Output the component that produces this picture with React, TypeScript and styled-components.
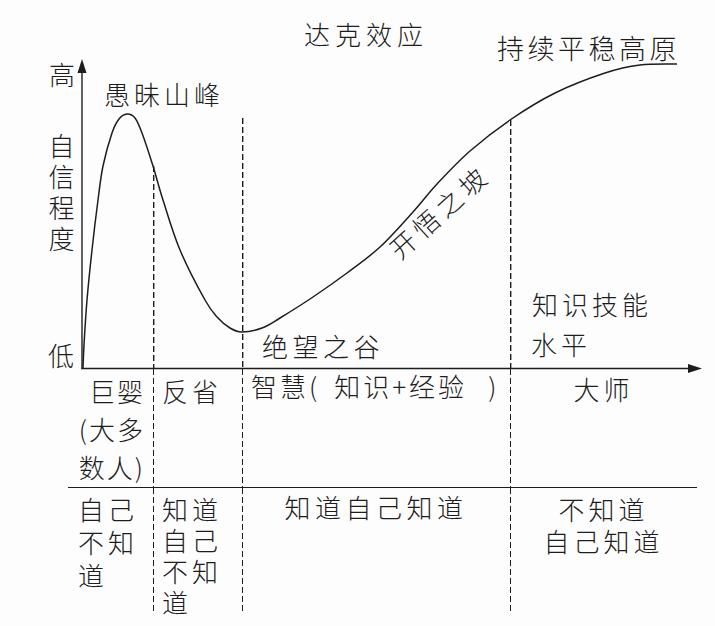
import React from "react";
import styled, { createGlobalStyle } from "styled-components";

const GlobalStyle = createGlobalStyle`
  html, body { margin: 0; padding: 0; background: #fdfdfd; }
  * { box-sizing: border-box; }
`;

const INK = "#1d1d1d";
const FONT = `"Noto Sans CJK SC", "Noto Sans", sans-serif`;

const Page = styled.div`
  width: 715px;
  height: 626px;
  background: #fdfdfd;
  color: ${INK};
  font-family: ${FONT};
  font-weight: 300;
  display: flex;
  flex-direction: column;
  overflow: hidden;
`;

const Chart = styled.div`
  position: relative;
  height: 369px;
  flex: none;
`;

const Drawing = styled.svg`
  position: absolute;
  inset: 0;
  overflow: visible;
`;

const Label = styled.div<{
  $left: number;
  $top: number;
  $size?: number;
  $ls?: number;
  $lh?: number;
  $rotate?: number;
}>`
  position: absolute;
  left: ${(p) => p.$left}px;
  top: ${(p) => p.$top}px;
  font-size: ${(p) => p.$size ?? 26}px;
  line-height: ${(p) => p.$lh ?? p.$size ?? 26}px;
  letter-spacing: ${(p) => p.$ls ?? 4}px;
  white-space: nowrap;
  transform: ${(p) => (p.$rotate ? `rotate(${p.$rotate}deg)` : "none")};
  transform-origin: center center;
`;

const VerticalLabel = styled.div<{ $left: number; $top: number }>`
  position: absolute;
  left: ${(p) => p.$left}px;
  top: ${(p) => p.$top}px;
  writing-mode: vertical-rl;
  text-orientation: upright;
  font-size: 26px;
  line-height: 28px;
  letter-spacing: 5px;
`;

const Table = styled.div`
  margin-left: 68px;
  width: 629px;
  display: grid;
  grid-template-columns: 85px 89px 268px 187px;
  grid-template-rows: 118px 126px;
  flex: none;
`;

const Cell = styled.div<{
  $dashed?: boolean;
  $rule?: boolean;
  $align?: "left" | "right" | "center";
  $pt: number;
  $pl?: number;
  $pr?: number;
  $lh?: number;
  $ls?: number;
}>`
  padding: ${(p) => p.$pt}px ${(p) => p.$pr ?? 0}px 0 ${(p) => p.$pl ?? 0}px;
  text-align: ${(p) => p.$align ?? "left"};
  font-size: 26px;
  line-height: ${(p) => p.$lh ?? 26}px;
  letter-spacing: ${(p) => p.$ls ?? 4}px;
  white-space: nowrap;
  border-top: ${(p) => (p.$rule ? `1.4px solid ${INK}` : "none")};
  background-image: ${(p) =>
    p.$dashed ? `linear-gradient(to bottom, ${INK} 0 6px, transparent 6px 9px)` : "none"};
  background-size: 1.4px 9px;
  background-repeat: repeat-y;
  background-position: 0 0;
`;

const Gap = styled.span<{ $w: number }>`
  display: inline-block;
  width: ${(p) => p.$w}px;
`;

const curvePoints: [number, number][] = [
  [83, 368], [84, 345], [87, 300], [92, 250], [98, 200], [103, 166], [112, 133],
  [119, 119], [127, 114], [135, 118], [142, 133], [153, 166], [163, 200], [180, 250],
  [205, 300], [218, 318], [230, 328], [242, 332], [262, 328], [280, 318], [313, 297],
  [347, 273], [380, 247], [413, 212], [437, 184], [470, 151], [510, 120], [555, 93],
  [605, 73], [640, 65], [677, 64],
];

function smoothPath(pts: [number, number][]): string {
  let d = `M${pts[0][0]},${pts[0][1]}`;
  for (let i = 0; i < pts.length - 1; i++) {
    const p0 = pts[i - 1] || pts[i];
    const p1 = pts[i];
    const p2 = pts[i + 1];
    const p3 = pts[i + 2] || p2;
    const c1x = p1[0] + (p2[0] - p0[0]) / 6;
    const c1y = p1[1] + (p2[1] - p0[1]) / 6;
    const c2x = p2[0] - (p3[0] - p1[0]) / 6;
    const c2y = p2[1] - (p3[1] - p1[1]) / 6;
    d += ` C${c1x.toFixed(2)},${c1y.toFixed(2)} ${c2x.toFixed(2)},${c2y.toFixed(2)} ${p2[0]},${p2[1]}`;
  }
  return d;
}

const CurveDrawing: React.FC = () => (
  <Drawing width={715} height={369} viewBox="0 0 715 369">
    {/* axes */}
    <line x1={82} y1={70} x2={82} y2={369} stroke={INK} strokeWidth={1.4} />
    <polygon points="82,59 77.5,73 86.5,73" fill={INK} />
    <line x1={81.3} y1={368.5} x2={690} y2={368.5} stroke={INK} strokeWidth={1.4} />
    <polygon points="702,368.5 688,364 688,373" fill={INK} />
    {/* dashed dividers */}
    <line x1={153.7} y1={166} x2={153.7} y2={369} stroke={INK} strokeWidth={1.4} strokeDasharray="6 3" />
    <line x1={242.7} y1={118} x2={242.7} y2={369} stroke={INK} strokeWidth={1.4} strokeDasharray="6 3" />
    <line x1={510.7} y1={120} x2={510.7} y2={369} stroke={INK} strokeWidth={1.4} strokeDasharray="6 3" />
    {/* Dunning–Kruger curve */}
    <path d={smoothPath(curvePoints)} fill="none" stroke={INK} strokeWidth={1.5} />
  </Drawing>
);

export default function App() {
  return (
    <>
      <GlobalStyle />
      <Page>
        <Chart>
          <CurveDrawing />
          <Label $left={304} $top={21} $ls={5}>达克效应</Label>
          <Label $left={497} $top={34} $size={27} $ls={3.5}>持续平稳高原</Label>
          <Label $left={49} $top={61}>高</Label>
          <Label $left={104} $top={81}>愚昧山峰</Label>
          <VerticalLabel $left={47} $top={133}>自信程度</VerticalLabel>
          <Label $left={48} $top={342}>低</Label>
          <Label $left={262} $top={333} $ls={4.5}>绝望之谷</Label>
          <Label $left={377} $top={198} $ls={5} $rotate={-42}>开悟之坡</Label>
          <Label $left={532} $top={291}>知识技能</Label>
          <Label $left={531} $top={331}>水平</Label>
        </Chart>
        <Table>
          <Cell $align="right" $pt={3} $pr={8} $lh={38} $ls={2}>
            巨婴<br />(大多<br />数人)
          </Cell>
          <Cell $dashed $pt={9} $pl={9}>反省</Cell>
          <Cell $dashed $pt={4} $pl={9} $ls={3}>
            智慧(<Gap $w={14} />知识+经验<Gap $w={21} />)
          </Cell>
          <Cell $dashed $align="center" $pt={7}>大师</Cell>

          <Cell $rule $pt={3.5} $pl={10} $lh={33}>
            自己<br />不知<br />道
          </Cell>
          <Cell $rule $dashed $pt={4.5} $pl={9} $lh={31}>
            知道<br />自己<br />不知<br />道
          </Cell>
          <Cell $rule $dashed $align="center" $pt={6} $ls={4.5}>知道自己知道</Cell>
          <Cell $rule $dashed $align="center" $pt={5} $lh={32}>
            不知道<br />自己知道
          </Cell>
        </Table>
      </Page>
    </>
  );
}
